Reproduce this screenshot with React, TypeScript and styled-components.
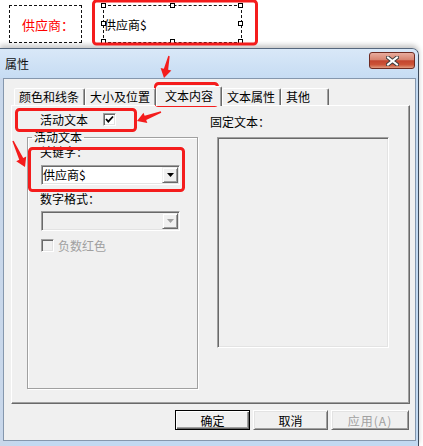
import styled, { createGlobalStyle } from "styled-components";

const GlobalStyle = createGlobalStyle`
  html, body {
    margin: 0;
    padding: 0;
    background: #fff;
  }
  body {
    font-family: "Noto Sans CJK SC", "Noto Sans", sans-serif;
    font-size: 12px;
    color: #000;
  }
  * {
    box-sizing: border-box;
  }
`;

const tabs = [
  { label: "颜色和线条", active: false },
  { label: "大小及位置", active: false },
  { label: "文本内容", active: true },
  { label: "文本属性", active: false },
  { label: "其他", active: false },
];

const handles: [number, number][] = [
  [0, 0],
  [50, 0],
  [100, 0],
  [0, 50],
  [100, 50],
  [0, 100],
  [50, 100],
  [100, 100],
];

// red marks drawn on top of the screenshot
const marks = [
  { x: 93.5, y: 1, w: 163, h: 43 },
  { x: 155.5, y: 83.5, w: 62, h: 22 },
  { x: 16.5, y: 109.5, w: 119, h: 21 },
  { x: 29.5, y: 148.5, w: 154, h: 42 },
];

const arrows: [number, number, number, number][] = [
  [169, 56, 164, 78],
  [161, 112, 137, 121],
  [13, 141, 25, 167],
];

const arrowPoints = (x1: number, y1: number, x2: number, y2: number) => {
  const dx = x2 - x1;
  const dy = y2 - y1;
  const len = Math.hypot(dx, dy);
  const ux = dx / len;
  const uy = dy / len;
  const px = -uy;
  const py = ux;
  const head = 9;
  const hw = 5.5;
  const sw = 2.2;
  const tw = 0.7;
  const bx = x2 - ux * head;
  const by = y2 - uy * head;
  const pts = [
    [x1 + px * tw, y1 + py * tw],
    [bx + px * sw, by + py * sw],
    [bx + px * hw, by + py * hw],
    [x2, y2],
    [bx - px * hw, by - py * hw],
    [bx - px * sw, by - py * sw],
    [x1 - px * tw, y1 - py * tw],
  ];
  return pts.map((p) => p.join(",")).join(" ");
};

export default function App() {
  return (
    <>
      <GlobalStyle />
      <Page>
        <TopStrip>
          <LabelBox>供应商：</LabelBox>
          <Selection>
            供应商$
            {handles.map(([h, v], i) => (
              <Handle key={i} $h={h} $v={v} />
            ))}
          </Selection>
        </TopStrip>

        <Window>
          <TitleBar>
            <TitleText>属性</TitleText>
            <CloseBtn>
              <svg width="13" height="10" viewBox="0 0 13 10">
                <path
                  d="M2 1.5 L11 8.5 M11 1.5 L2 8.5"
                  stroke="#3d3d3d"
                  strokeWidth="4"
                  strokeLinecap="square"
                />
                <path
                  d="M2 1.5 L11 8.5 M11 1.5 L2 8.5"
                  stroke="#fff"
                  strokeWidth="2"
                  strokeLinecap="square"
                />
              </svg>
            </CloseBtn>
          </TitleBar>

          <Body>
            <TabStrip>
              {tabs.map((t) => (
                <Tab key={t.label} $active={t.active}>
                  {t.label}
                </Tab>
              ))}
            </TabStrip>

            <Panel>
              <LeftCol>
                <CheckRow>
                  <span>活动文本</span>
                  <CheckBox $checked>
                    <svg width="9" height="9" viewBox="0 0 9 9">
                      <polyline
                        points="1,4 3.3,6.6 8,1.5"
                        fill="none"
                        stroke="#000"
                        strokeWidth="1.8"
                      />
                    </svg>
                  </CheckBox>
                </CheckRow>

                <Group>
                  <Legend>活动文本</Legend>
                  <GroupBody>
                    <FieldLabel $gap={2}>关键字：</FieldLabel>
                    <Combo>
                      <ComboText>供应商$</ComboText>
                      <DropBtn>
                        <svg width="7" height="4" viewBox="0 0 7 4">
                          <polygon points="0,0 7,0 3.5,4" fill="#000" />
                        </svg>
                      </DropBtn>
                    </Combo>

                    <FieldLabel $gap={7}>数字格式：</FieldLabel>
                    <Combo $disabled>
                      <ComboText />
                      <DropBtn>
                        <svg width="7" height="4" viewBox="0 0 7 4">
                          <polygon points="0,0 7,0 3.5,4" fill="#a0a0a0" />
                        </svg>
                      </DropBtn>
                    </Combo>

                    <DisabledRow>
                      <CheckBox $disabled />
                      <span>负数红色</span>
                    </DisabledRow>
                  </GroupBody>
                </Group>
              </LeftCol>

              <RightCol>
                <FieldLabel>固定文本：</FieldLabel>
                <FixedBox />
              </RightCol>
            </Panel>

            <ButtonRow>
              <Button $default>确定</Button>
              <Button>取消</Button>
              <Button $disabled $wide>
                应用(A)
              </Button>
            </ButtonRow>
          </Body>
        </Window>

        <Marks width="423" height="446" viewBox="0 0 423 446">
          {marks.map((m, i) => (
            <rect
              key={i}
              x={m.x}
              y={m.y}
              width={m.w}
              height={m.h}
              rx="3"
              fill="none"
              stroke="#f41c1c"
              strokeWidth="3"
            />
          ))}
          {arrows.map((a, i) => (
            <polygon key={i} points={arrowPoints(...a)} fill="#f41c1c" />
          ))}
        </Marks>
      </Page>
    </>
  );
}

const Page = styled.div`
  position: relative;
  width: 423px;
  height: 446px;
  overflow: hidden;
  background: #fff;
  display: flex;
  flex-direction: column;
`;

const TopStrip = styled.div`
  height: 48px;
  flex: none;
  display: flex;
  align-items: flex-start;
  padding-top: 5px;
`;

const LabelBox = styled.div`
  margin-left: 9px;
  width: 73px;
  height: 38px;
  border: 1px dashed #111;
  display: flex;
  align-items: center;
  padding-left: 12px;
  color: #ff0000;
  font-size: 13px;
`;

const Selection = styled.div`
  position: relative;
  margin-left: 21px;
  width: 139px;
  height: 38px;
  border: 1px dashed #111;
  display: flex;
  align-items: center;
  font-size: 12px;
`;

const Handle = styled.span<{ $h: number; $v: number }>`
  position: absolute;
  left: calc(${(p) => p.$h}% - 3px);
  top: calc(${(p) => p.$v}% - 3px);
  width: 5px;
  height: 5px;
  border: 1px solid #000;
  background: #fff;
`;

const Window = styled.div`
  flex: 1;
  width: 419px;
  display: flex;
  flex-direction: column;
  padding: 0 2px 5px 3px;
  background: linear-gradient(to right, #c9d7ea, #c2d9f1 6%, #c2d9f1);
  border-top: 1px solid #56677d;
  border-right: 1px solid #3d4b5d;
  border-top-right-radius: 7px;
  box-shadow: 0 -3px 5px rgba(0, 0, 0, 0.22);
`;

const TitleBar = styled.div`
  height: 29px;
  flex: none;
  display: flex;
  align-items: flex-start;
  background: linear-gradient(#d9e8f8, #c6dcf3);
  margin: 0 -2px 0 -3px;
  padding: 0 2px 0 3px;
  border-top-right-radius: 6px;
`;

const TitleText = styled.div`
  padding-left: 2px;
  line-height: 29px;
  font-size: 12px;
  color: #111;
`;

const CloseBtn = styled.div`
  margin-left: auto;
  margin-top: 3px;
  margin-right: 1px;
  width: 46px;
  height: 17px;
  border: 1px solid #6e2b22;
  border-radius: 3px;
  display: flex;
  align-items: center;
  justify-content: center;
  background: linear-gradient(
    #e8ac9e 0%,
    #d78470 45%,
    #c3442e 52%,
    #cc5438 78%,
    #e19a7f 100%
  );
`;

const Body = styled.div`
  flex: 1;
  display: flex;
  flex-direction: column;
  background: #f0f0f0;
  border: 1px solid #8597ad;
  padding: 7px 5px 10px 7px;
`;

const TabStrip = styled.div`
  position: relative;
  z-index: 1;
  height: 19px;
  flex: none;
  display: flex;
  align-items: flex-end;
  padding-left: 3px;
`;

const Tab = styled.div<{ $active?: boolean }>`
  height: ${(p) => (p.$active ? 20 : 17)}px;
  margin-bottom: ${(p) => (p.$active ? -1 : 0)}px;
  min-width: 48px;
  padding: ${(p) => (p.$active ? "0 8px" : "0 5px 0 4px")};
  line-height: ${(p) => (p.$active ? 17 : 15)}px;
  white-space: nowrap;
  background: #f0f0f0;
  border: 1px solid;
  border-bottom: none;
  border-color: #fff #696969 transparent #fff;
  border-radius: 2px 2px 0 0;
  box-shadow: inset -1px 0 0 #a0a0a0;
`;

const Panel = styled.div`
  height: 299px;
  flex: none;
  display: flex;
  border: 1px solid;
  border-color: #fff #696969 #696969 #fff;
  box-shadow: inset -1px -1px 0 #a0a0a0;
`;

const LeftCol = styled.div`
  width: 186px;
  display: flex;
  flex-direction: column;
  padding: 1px 0 14px 0;
`;

const CheckRow = styled.div`
  height: 24px;
  display: flex;
  align-items: center;
  padding-left: 28px;
  gap: 15px;
`;

const CheckBox = styled.div<{ $checked?: boolean; $disabled?: boolean }>`
  width: 13px;
  height: 13px;
  flex: none;
  display: flex;
  align-items: center;
  justify-content: center;
  background: ${(p) => (p.$disabled ? "#f0f0f0" : "#fff")};
  border: 1px solid;
  border-color: #a0a0a0 #fff #fff #a0a0a0;
  box-shadow: inset 1px 1px 0 #696969, inset -1px -1px 0 #e3e3e3;
`;

const Group = styled.fieldset`
  flex: 1;
  margin: 0 0 0 15px;
  padding: 0;
  min-width: 0;
  border: 1px solid #a0a0a0;
  box-shadow: inset 1px 1px 0 #fff, 1px 1px 0 #fff;
`;

const Legend = styled.legend`
  margin-left: 4px;
  padding: 0 2px;
  height: 12px;
  line-height: 12px;
  font-size: 12px;
`;

const GroupBody = styled.div`
  display: flex;
  flex-direction: column;
  align-items: flex-start;
  padding-left: 12px;
`;

const FieldLabel = styled.div<{ $gap?: number }>`
  line-height: 14px;
  margin-top: ${(p) => p.$gap ?? 0}px;
`;

const Combo = styled.div<{ $disabled?: boolean }>`
  margin: ${(p) => (p.$disabled ? "5px" : "6px")} 0 0 1px;
  width: 139px;
  height: 20px;
  display: flex;
  padding: 1px;
  background: ${(p) => (p.$disabled ? "#f0f0f0" : "#fff")};
  border: 1px solid;
  border-color: #a0a0a0 #fff #fff #a0a0a0;
  box-shadow: inset 1px 1px 0 #696969, inset -1px -1px 0 #e3e3e3;
`;

const ComboText = styled.div`
  flex: 1;
  line-height: 16px;
`;

const DropBtn = styled.div`
  width: 16px;
  height: 16px;
  display: flex;
  align-items: center;
  justify-content: center;
  background: #f0f0f0;
  border: 1px solid;
  border-color: #f0f0f0 #696969 #696969 #f0f0f0;
  box-shadow: inset 1px 1px 0 #fff, inset -1px -1px 0 #a0a0a0;
`;

const DisabledRow = styled.div`
  margin: 6px 0 0 1px;
  height: 16px;
  display: flex;
  align-items: center;
  gap: 4px;
  color: #a0a0a0;
`;

const RightCol = styled.div`
  margin-left: 12px;
  display: flex;
  flex-direction: column;
  padding-top: 9px;
`;

const FixedBox = styled.div`
  margin: 8px 0 0 7px;
  width: 172px;
  height: 211px;
  background: #f0f0f0;
  border: 1px solid;
  border-color: #a0a0a0 #fff #fff #a0a0a0;
  box-shadow: inset 1px 1px 0 #696969, inset -1px -1px 0 #e3e3e3;
`;

const ButtonRow = styled.div`
  margin-top: 6px;
  display: flex;
  justify-content: flex-end;
  gap: 3px;
  padding-right: 1px;
`;

const Button = styled.div<{
  $default?: boolean;
  $disabled?: boolean;
  $wide?: boolean;
}>`
  width: ${(p) => (p.$wide ? 78 : 75)}px;
  height: 20px;
  display: flex;
  align-items: center;
  justify-content: center;
  background: #f0f0f0;
  color: ${(p) => (p.$disabled ? "#a0a0a0" : "#000")};
  letter-spacing: ${(p) => (p.$wide ? 1 : 0)}px;
  border: 1px solid;
  border-color: ${(p) =>
    p.$default ? "#000" : "#fff #696969 #696969 #fff"};
  box-shadow: ${(p) =>
    p.$default
      ? "inset 1px 1px 0 #fff, inset -1px -1px 0 #696969, inset -2px -2px 0 #a0a0a0"
      : "inset 1px 1px 0 #e3e3e3, inset -1px -1px 0 #a0a0a0"};
`;

const Marks = styled.svg`
  position: absolute;
  left: 0;
  top: 0;
  pointer-events: none;
`;
